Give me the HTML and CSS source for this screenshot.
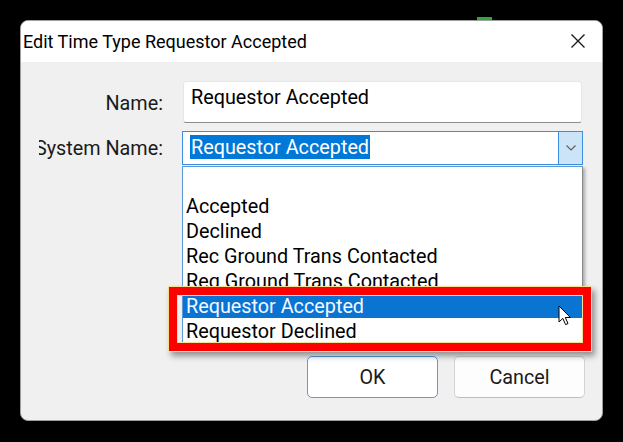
FILE: index.html
```html
<!DOCTYPE html>
<html>
<head>
<meta charset="utf-8">
<link rel="stylesheet" href="styles.css">
</head>
<body>
<div class="desk">
  <div class="glint"></div>
  <div class="window">
    <div class="titlebar">
      <span class="title">Edit Time Type Requestor Accepted</span>
      <svg class="close" width="16" height="16" viewBox="0 0 16 16"><path d="M1.5 1.5 L14.5 14.5 M14.5 1.5 L1.5 14.5" stroke="#1b1b1b" stroke-width="1.4" fill="none"/></svg>
    </div>
    <div class="content">
      <div class="form">
        <div class="label"><span>Name:</span></div>
        <div class="textbox">Requestor Accepted</div>
        <div class="label label-sys"><span>System Name:</span></div>
        <div class="combo">
          <span class="sel">Requestor Accepted</span>
          <span class="drop"><svg width="10" height="6" viewBox="0 0 10 6"><path d="M0.5 0.5 L5 5 L9.5 0.5" stroke="#606060" stroke-width="1.2" fill="none"/></svg></span>
        </div>
      </div>
      <div class="buttons">
        <button class="btn btn-ok">OK</button>
        <button class="btn">Cancel</button>
      </div>
    </div>
  </div>
  <ul class="list">
    <li class="item"></li>
    <li class="item">Accepted</li>
    <li class="item">Declined</li>
    <li class="item">Rec Ground Trans Contacted</li>
    <li class="item">Req Ground Trans Contacted</li>
    <li class="item item-hl">Requestor Accepted</li>
    <li class="item">Requestor Declined</li>
  </ul>
  <div class="callout"></div>
  <svg class="cursor" width="14" height="22" viewBox="0 0 14 22"><path d="M1 1 L1 17 L4.8 13.4 L7.6 19.6 L10 18.6 L7.3 12.5 L12.4 12.5 Z" fill="#fff" stroke="#000" stroke-width="1" stroke-linejoin="round"/></svg>
</div>
</body>
</html>
```
FILE: styles.css
```css
* { box-sizing: border-box; }
html, body { margin: 0; padding: 0; background: #000; }
.desk {
  position: relative;
  width: 623px;
  height: 442px;
  padding: 20px;
  background: #000;
  font-family: Roboto, "Noto Sans", sans-serif;
}
.glint {
  position: absolute;
  left: 477px;
  top: 17px;
  width: 15px;
  height: 4px;
  background: #2fa83a;
}
.window {
  position: relative;
  width: 583px;
  height: 401px;
  border: 1px solid #9e9e9e;
  border-radius: 8px;
  overflow: hidden;
  background: #f0f0f0;
  display: flex;
  flex-direction: column;
}
.titlebar {
  height: 41px;
  background: #fff;
  display: flex;
  align-items: flex-start;
  justify-content: space-between;
  padding: 10px 16px 0 2px;
}
.title {
  font-size: 18px;
  line-height: 22px;
  color: #000;
}
.close { margin-top: 2px; }
.content {
  flex: 1;
  display: flex;
  flex-direction: column;
  padding: 19px 17px 22px 18px;
}
.form {
  display: grid;
  grid-template-columns: 124px 401px;
  grid-template-rows: 42px 34px;
  column-gap: 19px;
  row-gap: 8px;
}
.label {
  display: flex;
  justify-content: flex-end;
  align-items: center;
  overflow: hidden;
  white-space: nowrap;
  font-size: 19.8px;
  line-height: 25px;
  color: #1a1a1a;
  padding-top: 3px;
}
.label-sys { padding-top: 0; }
.textbox {
  margin: 0 1px;
  background: #fff;
  border: 1px solid #e6e6e6;
  border-bottom-color: #8c8c8c;
  border-radius: 3px;
  font-size: 19.8px;
  line-height: 25px;
  color: #000;
  padding: 3px 7px 0;
  white-space: nowrap;
}
.combo {
  position: relative;
  background: #fff;
  border: 1px solid #3d8ee0;
  padding: 3px 0 0 7px;
}
.sel {
  display: inline-block;
  height: 24px;
  line-height: 25px;
  font-size: 19.8px;
  background: #0078d7;
  color: #fff;
  padding: 0 1px;
  white-space: nowrap;
}
.drop {
  position: absolute;
  right: -1px;
  top: -1px;
  bottom: -1px;
  width: 25px;
  background: #cce4f7;
  border: 1px solid #3d8ee0;
  display: flex;
  align-items: center;
  justify-content: center;
}
.buttons {
  margin-top: auto;
  display: flex;
  justify-content: flex-end;
  gap: 16px;
}
.btn {
  width: 131px;
  height: 42px;
  border-radius: 5px;
  background: #fdfdfd;
  border: 1px solid #d3d3d3;
  border-bottom-color: #bdbdbd;
  font-family: Roboto, "Noto Sans", sans-serif;
  font-size: 19.8px;
  color: #1a1a1a;
  padding: 0;
}
.btn-ok {
  background: #fff;
  border: 1.5px solid #5a9ddb;
}
.list {
  position: absolute;
  left: 182px;
  top: 166px;
  width: 401px;
  height: 180px;
  margin: 0;
  padding: 2px 0 0 0;
  list-style: none;
  background: #fff;
  border: 1px solid #5b9bd8;
  border-right-color: #8a8a8a;
  border-bottom-color: #8a8a8a;
  box-shadow: 2px 2px 3px rgba(0,0,0,0.3);
}
.item {
  height: 25px;
  line-height: 25px;
  font-size: 19.8px;
  color: #000;
  padding-left: 3px;
  white-space: nowrap;
}
.item-hl {
  background: #0a74d2;
  color: #f4f8ff;
  height: 24px;
  margin-bottom: 1px;
}
.callout {
  position: absolute;
  left: 169px;
  top: 287px;
  width: 422px;
  height: 64px;
  border: 8px solid #f00;
  box-shadow: 0 0 0 1px #f2df9a, inset 0 0 0 1px #f2df9a, 3px 4px 6px 1px rgba(0,0,0,0.4);
}
.cursor {
  position: absolute;
  left: 558px;
  top: 305px;
}
```
